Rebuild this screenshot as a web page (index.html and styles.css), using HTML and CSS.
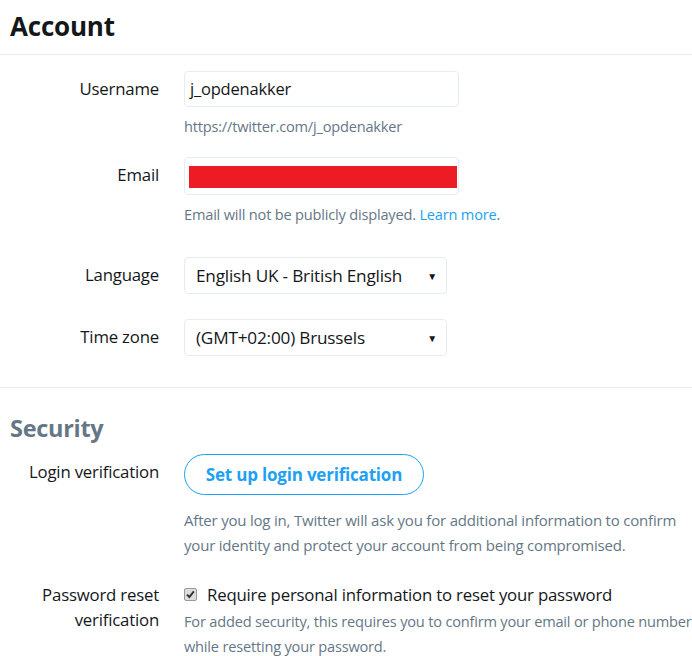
FILE: index.html
```html
<!DOCTYPE html>
<html>
<head>
<meta charset="utf-8">
<link rel="stylesheet" href="styles.css">
</head>
<body>
<div class="page">
  <h1 class="title">Account</h1>
  <div class="divider"></div>
  <div class="section">
    <div class="row">
      <div class="label">Username</div>
      <div class="field">
        <div class="input">j_opdenakker</div>
        <div class="hint">https://twitter.com/j_opdenakker</div>
      </div>
    </div>
    <div class="row row-email">
      <div class="label">Email</div>
      <div class="field">
        <div class="input input-email"><div class="redact"></div></div>
        <div class="hint">Email will not be publicly displayed. <span class="link">Learn more</span>.</div>
      </div>
    </div>
    <div class="row row-lang">
      <div class="label">Language</div>
      <div class="field">
        <div class="select"><span>English UK - British English</span><span class="arrow">▼</span></div>
      </div>
    </div>
    <div class="row row-tz">
      <div class="label">Time zone</div>
      <div class="field">
        <div class="select"><span>(GMT+02:00) Brussels</span><span class="arrow">▼</span></div>
      </div>
    </div>
  </div>
  <div class="divider"></div>
  <h2 class="subtitle">Security</h2>
  <div class="row row-login">
    <div class="label">Login verification</div>
    <div class="field">
      <div class="btn">Set up login verification</div>
      <div class="desc">After you log in, Twitter will ask you for additional information to confirm your identity and protect your account from being compromised.</div>
    </div>
  </div>
  <div class="row row-pw">
    <div class="label label-pw">Password reset<br>verification</div>
    <div class="field">
      <div class="check-row"><span class="checkbox"><svg width="11" height="11" viewBox="0 0 11 11"><path d="M2 5.6 L4.4 8 L8.8 2.4" fill="none" stroke="#333" stroke-width="2"/></svg></span><span class="check-text">Require personal information to reset your password</span></div>
      <div class="desc desc-pw">For added security, this requires you to confirm your email or phone number while resetting your password.</div>
    </div>
  </div>
</div>
</body>
</html>
```
FILE: styles.css
```css
* { box-sizing: border-box; }
html, body { margin: 0; padding: 0; background: #fff; }
body { font-family: "Open Sans", "Noto Sans", sans-serif; color: #14171a; width: 692px; height: 656px; overflow: hidden; }
.page { width: 692px; }
.title { margin: 0; padding: 8px 10px 0 10px; height: 54px; font-size: 26px; font-weight: 700; line-height: 36px; letter-spacing: -0.2px; color: #14171a; }
.divider { height: 1px; background: #e6ecf0; }
.section { padding-top: 16px; padding-bottom: 31px; }
.row { display: flex; }
.label { flex: 0 0 159px; width: 159px; text-align: right; font-size: 16.8px; line-height: 36px; color: #14171a; letter-spacing: -0.2px; }
.field { margin-left: 25px; flex: 0 0 auto; }
.input { width: 275px; height: 36px; border: 1px solid #e6ecf0; border-radius: 4px; font-size: 16.5px; line-height: 34px; padding-left: 5px; color: #14171a; letter-spacing: -0.2px; }
.hint { font-size: 14.6px; color: #657786; line-height: 20px; margin-top: 9px; letter-spacing: -0.2px; }
.link { color: #1da1f2; }
.row-email { margin-top: 21px; }
.input-email { padding: 8px 1px 0 4px; height: 38px; }
.redact { width: 268px; height: 22px; background: #ed1c24; }
.row-lang { margin-top: 33px; }
.row-tz { margin-top: 25px; }
.select { width: 263px; height: 37px; border: 1px solid #e6ecf0; border-radius: 4px; display: flex; justify-content: space-between; align-items: center; padding: 0 9px 0 11px; font-size: 17.2px; color: #14171a; letter-spacing: -0.2px; }
.arrow { font-size: 10px; color: #14171a; }
.subtitle { margin: 0; padding: 22px 10px 0 10px; height: 66px; font-size: 23.5px; font-weight: 700; line-height: 36px; color: #657786; letter-spacing: -0.3px; }
.btn { width: 240px; height: 41px; border: 1px solid #1da1f2; border-radius: 21px; color: #1da1f2; font-weight: 700; font-size: 17px; line-height: 39px; text-align: center; letter-spacing: -0.2px; }
.desc { width: 500px; font-size: 15px; color: #657786; line-height: 25px; margin-top: 13px; letter-spacing: -0.2px; }
.row-pw { margin-top: 24px; }
.label-pw { line-height: 25px; }
.check-row { display: flex; align-items: center; height: 25px; }
.checkbox { width: 13px; height: 13px; border: 1px solid #999; border-radius: 2px; background: #ddd; display: inline-flex; align-items: center; justify-content: center; margin-right: 10px; }
.check-text { font-size: 16.8px; color: #14171a; letter-spacing: -0.2px; }
.desc-pw { margin-top: 2px; width: 530px; font-size: 14.6px; letter-spacing: -0.2px; }
```
